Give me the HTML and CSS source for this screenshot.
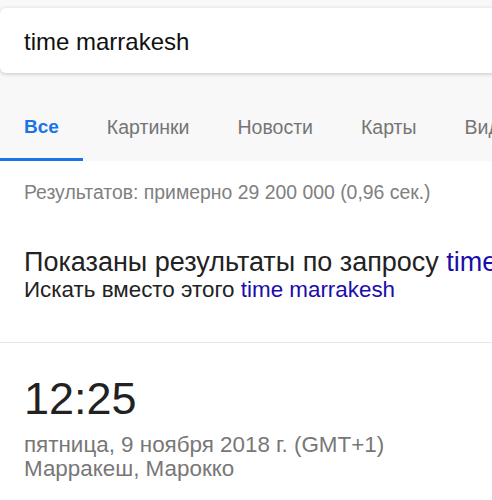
FILE: index.html
```html
<!DOCTYPE html>
<html lang="ru">
<head>
<meta charset="utf-8">
<title>time marrakesh</title>
<link rel="stylesheet" href="styles.css">
</head>
<body>
<div class="top">
  <div class="search"><span class="query">time marrakesh</span></div>
  <nav class="tabs">
    <a class="tab active">Все</a>
    <a class="tab">Картинки</a>
    <a class="tab">Новости</a>
    <a class="tab">Карты</a>
    <a class="tab">Видео</a>
  </nav>
</div>
<div class="stats">Результатов: примерно 29 200 000 (0,96 сек.)</div>
<div class="spell">
  <div class="showing">Показаны результаты по запросу <a class="link">time marrakech</a></div>
  <div class="instead">Искать вместо этого <a class="link">time marrakesh</a></div>
</div>
<div class="divider"></div>
<div class="clock">
  <div class="time">12:25</div>
  <div class="date">пятница, 9 ноября 2018 г. (GMT+1)</div>
  <div class="place">Марракеш, Марокко</div>
</div>
</body>
</html>
```
FILE: styles.css
```css
html, body {
  margin: 0;
  padding: 0;
  background: #fff;
}
body {
  font-family: "Liberation Sans", Arial, sans-serif;
  width: 492px;
  overflow: hidden;
  white-space: nowrap;
}
.top {
  background: #f8f8f8;
  padding-top: 8px;
}
.search {
  height: 65px;
  width: 600px;
  background: #fff;
  border-radius: 6px 0 0 6px;
  box-shadow: 0 1px 4px rgba(0, 0, 0, 0.2);
  display: flex;
  align-items: center;
  padding: 2px 24px 0;
  box-sizing: border-box;
}
.query {
  font-size: 24px;
  color: #111;
}
.tabs {
  display: flex;
  padding-top: 42px;
}
.tab {
  display: block;
  padding: 0 24px 19px;
  line-height: 24px;
  font-size: 19.5px;
  color: #757575;
  border-bottom: 3px solid transparent;
}
.tab.active {
  color: #1a73e8;
  font-weight: bold;
  font-size: 19px;
  border-bottom-color: #1a73e8;
}
.stats {
  padding: 19px 24px 0;
  font-size: 19.4px;
  line-height: 24px;
  color: #808080;
}
.spell {
  padding: 43px 24px 0;
  color: #222;
}
.showing {
  font-size: 27px;
  line-height: 30px;
}
.instead {
  font-size: 22.4px;
  line-height: 25px;
}
.link {
  color: #1a0dab;
}
.divider {
  margin-top: 40px;
  height: 1px;
  background: #e8e8e8;
}
.clock {
  padding: 30px 24px 0;
}
.time {
  font-size: 45px;
  line-height: 52px;
  color: #222;
}
.date, .place {
  font-size: 22.4px;
  line-height: 24px;
  color: #777;
}
.date {
  margin-top: 8px;
}
```
